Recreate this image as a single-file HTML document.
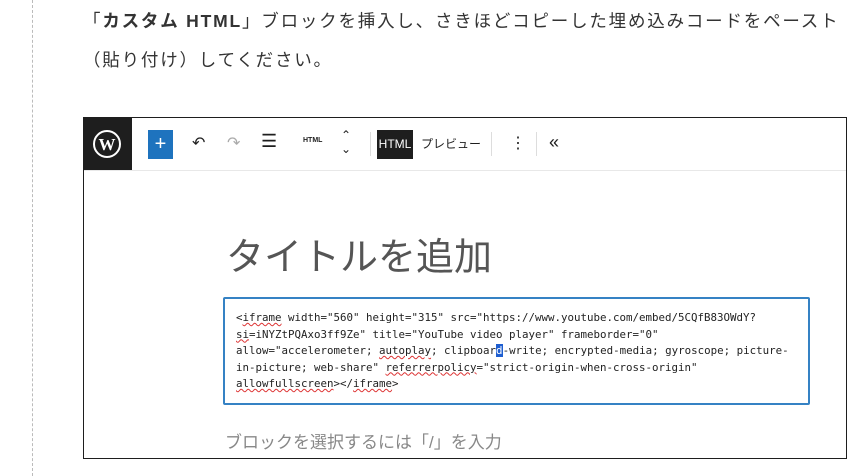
<!DOCTYPE html>
<html><head><meta charset="utf-8"><style>
body{margin:0;width:857px;height:476px;background:#fff;position:relative;overflow:hidden;font-family:"Liberation Sans","Noto Sans CJK JP",sans-serif;}
.dots{position:absolute;left:32px;top:0;height:476px;border-left:1px dashed #bbb;}
.p{position:absolute;left:83px;font-size:17.5px;color:#333;white-space:nowrap;letter-spacing:1.8px}
.ed{position:absolute;left:83px;top:117px;width:762px;height:340px;border:1px solid #1e1e1e;background:#fff;}
.tb{position:absolute;left:0;top:0;right:0;height:52px;border-bottom:1px solid #e8e8e8;}
.logo{position:absolute;left:0;top:0;width:48px;height:52px;background:#1e1e1e;}
.ic{position:absolute;color:#1e1e1e;font-size:16px}
.title{position:absolute;left:142px;top:108px;font-size:38px;color:#555;}
.ta{position:absolute;left:139px;top:179px;width:583px;height:104px;border:2px solid #3582c4;border-radius:2px;}
.code{position:absolute;left:11px;top:11px;font-family:"DejaVu Sans Mono","Liberation Mono",monospace;font-size:10.8px;line-height:16.5px;color:#222;white-space:pre}
.u{text-decoration:underline wavy #d33;text-decoration-thickness:1px}
.ph{position:absolute;left:141px;top:310px;font-size:17px;color:#888;}
</style></head><body>
<div class="dots"></div>
<div class="p" style="top:8px">「<b>カスタム HTML</b>」ブロックを挿入し、さきほどコピーした埋め込みコードをペースト</div>
<div class="p" style="top:47px">（貼り付け）してください。</div>
<div class="ed">
 <div class="tb">
  <div class="logo"><svg width="48" height="52" viewBox="0 0 48 52"><circle cx="23" cy="26" r="13" fill="none" stroke="#fff" stroke-width="2"/><text x="23" y="32" font-size="17" font-family="Liberation Serif,serif" font-weight="bold" fill="#fff" text-anchor="middle">W</text></svg></div>
  <div style="position:absolute;left:64px;top:12px;width:25px;height:29px;background:#1e73be;color:#fff;font-size:20px;text-align:center;line-height:28px">+</div>
  <div class="ic" style="left:108px;top:15px">↶</div>
  <div class="ic" style="left:143px;top:15px;color:#aaa">↷</div>
  <div class="ic" style="left:177px;top:13px;font-size:18px">☰</div>
  <div class="ic" style="left:219px;top:19px;font-size:7px;font-weight:bold">HTML</div>
  <div class="ic" style="left:257px;top:10px;font-size:12px;line-height:14px">⌃<br>⌄</div>
  <div style="position:absolute;left:286px;top:14px;width:1px;height:24px;background:#ddd"></div>
  <div style="position:absolute;left:293px;top:12px;width:36px;height:29px;background:#1e1e1e;color:#fff;font-size:12px;text-align:center;line-height:29px">HTML</div>
  <div class="ic" style="left:337px;top:17px;font-size:12px">プレビュー</div>
  <div style="position:absolute;left:407px;top:14px;width:1px;height:24px;background:#ddd"></div>
  <div class="ic" style="left:426px;top:15px;font-size:16px">⋮</div>
  <div style="position:absolute;left:452px;top:14px;width:1px;height:24px;background:#ddd"></div>
  <div class="ic" style="left:465px;top:14px;font-size:18px">«</div>
 </div>
 <div class="title">タイトルを追加</div>
 <div class="ta"><div class="code">&lt;<span class="u">iframe</span> width="560" height="315" src="https://www.youtube.com/embed/5CQfB83OWdY?
<span class="u">si</span>=iNYZtPQAxo3ff9Ze" title="YouTube video player" frameborder="0"
allow="accelerometer; <span class="u">autoplay</span>; clipboar<span style="background:#1e5ed0;color:#fff">d</span>-write; encrypted-media; gyroscope; picture-
in-picture; web-share" <span class="u">referrerpolicy</span>="strict-origin-when-cross-origin"
<span class="u">allowfullscreen</span>&gt;&lt;/<span class="u">iframe</span>&gt;</div></div>
 <div class="ph">ブロックを選択するには「/」を入力</div>
</div>
</body></html>
